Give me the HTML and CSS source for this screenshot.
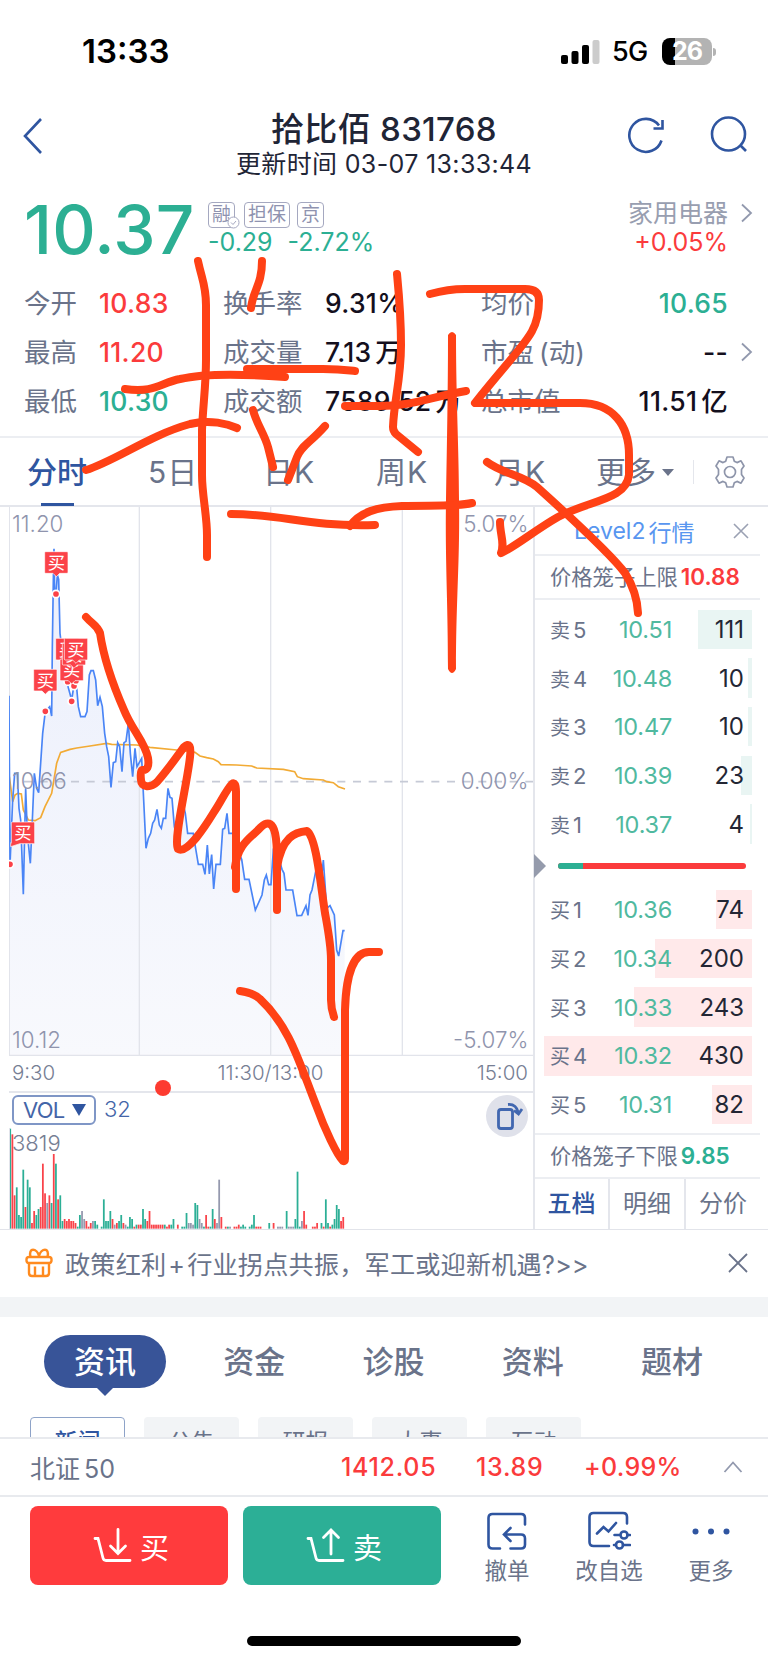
FILE: index.html
```html
<!DOCTYPE html>
<html lang="zh-CN">
  <head>
    <meta charset="UTF-8" />
    <meta name="viewport" content="width=device-width, initial-scale=1.0" />
    <title>拾比佰 831768</title>
    <link rel="stylesheet" href="styles.css">
  </head>
  <body>
    <div class="status-bar">
      <span class="clock">13:33</span>
      <div class="status-right">
        <svg class="signal" width="40" height="26" viewBox="0 0 40 26">
          <rect x="0" y="16" width="7" height="9" rx="2" />
          <rect x="10.500" y="12" width="7" height="13" rx="2" />
          <rect x="21" y="6" width="7" height="19" rx="2" />
          <rect x="31.500" y="1" width="7" height="24" rx="2" fill="#ccc" />
        </svg>
        <span class="network">5G</span>
        <span class="battery">26</span>
        <span class="battery-nub"></span>
      </div>
    </div>

    <header class="nav">
      <svg class="nav-back" width="22" height="38" viewBox="0 0 22 38">
        <path d="M19 2 L3 19 L19 36" />
      </svg>
      <div class="nav-title">
        <h1>拾比佰 831768</h1>
        <p>更新时间 03-07 13:33:44</p>
      </div>
      <div class="nav-icons">
        <svg width="40" height="40" viewBox="0 0 40 40">
          <path d="M34.500 25.500 A16.500 16.500 0 1 1 32 10.500" />
          <path d="M35.500 5 V13.500 H26.500" />
        </svg>
        <svg width="40" height="40" viewBox="0 0 40 40">
          <circle cx="19.500" cy="19" r="16.500" />
          <path d="M31 30 L37 36" />
        </svg>
      </div>
    </header>

    <section class="quote">
      <div class="price">10.37</div>
      <div class="quote-mid">
        <div class="tags">
          <span class="tag tag-margin">融<svg width="13" height="13" viewBox="0 0 13 13"><circle cx="6.500" cy="6.500" r="5.500" /><path d="M4 6.500 L6 8.500 L9 5" /></svg></span>
          <span class="tag">担保</span>
          <span class="tag">京</span>
        </div>
        <div class="change green"><span>-0.29</span><span>-2.72%</span></div>
      </div>
      <div class="sector">
        <div class="sector-name">家用电器</div>
        <div class="sector-change red">+0.05%</div>
      </div>
      <svg class="chevron" width="14" height="20" viewBox="0 0 14 20"><path d="M2 1.500 L11 10 L2 18.500" /></svg>
    </section>

    <section class="stats">
      <span class="label">今开</span><span class="num red">10.83</span>
      <span class="label">换手率</span><span class="num">9.31%</span>
      <span class="label">均价</span><span class="num right green">10.65</span><span></span>
      <span class="label">最高</span><span class="num red">11.20</span>
      <span class="label">成交量</span><span class="num">7.13<i>万</i></span>
      <span class="label">市盈<i>(动)</i></span><span class="num right">--</span>
      <svg class="chevron" width="14" height="20" viewBox="0 0 14 20"><path d="M2 1.500 L11 10 L2 18.500" /></svg>
      <span class="label">最低</span><span class="num green">10.30</span>
      <span class="label">成交额</span><span class="num">7589.52<i>万</i></span>
      <span class="label">总市值</span><span class="num right">11.51<i>亿</i></span><span></span>
    </section>

    <nav class="periods">
      <span class="period active">分时</span>
      <span class="period">5<i>日</i></span>
      <span class="period">日<i>K</i></span>
      <span class="period">周<i>K</i></span>
      <span class="period">月<i>K</i></span>
      <span class="period period-more">更多<b class="caret"></b></span>
      <span class="settings">
        <svg width="36" height="36" viewBox="0 0 36 36">
          <path d="M15 3 H21 L22.300 7.200 L25 8.600 L29 6.800 L32 12 L29.500 15.500 V20.500 L32 24 L29 29.200 L25 27.400 L22.300 28.800 L21 33 H15 L13.700 28.800 L11 27.400 L7 29.200 L4 24 L6.500 20.500 V15.500 L4 12 L7 6.800 L11 8.600 L13.700 7.200 Z" />
          <circle cx="18" cy="18" r="5.500" />
        </svg>
      </span>
    </nav>

    <main class="board">
      <div class="charts">
        <!-- plot units are a third of a pixel -->
        <svg class="plot" width="524" height="549" viewBox="27 21 1572 1647">
          <defs>
            <linearGradient id="area" x1="0" y1="0" x2="0" y2="1">
              <stop offset="0" stop-color="#ebeffc" />
              <stop offset="1" stop-color="#f8f9fd" />
            </linearGradient>
          </defs>
          <path class="area" id="price-area" />
          <path class="grid" d="M28 18 V1668 M418 18 V1668 M812 18 V1668 M1207 18 V1668 M27 1666 H1599" />
          <path class="zero" d="M72 845 H1599" />
          <polyline class="avg" points="28,830 38,905 45,885 53,880 64,882 70,930 78,945 85,960 105,962 122,953 135,920 155,880 160,850 170,790 182,757 210,748 230,744 270,738 320,730 335,733 410,735 450,742 530,750 585,757 600,768 620,773 640,777 655,785 663,794 710,795 755,798 770,804 850,808 884,815 892,830 910,836 970,840 980,845 1000,848 1015,860 1035,867" />
          <polyline class="line" id="price-line" points="27,587 30,1095 38,900 44,820 52,820 57,925 62,960 70,1183 77,865 82,1000 91,1090 97,960 103,820 110,865 116,878 128,700 136,634 149,620 155,648 157,440 160,240 162,146 164,270 168,282 172,225 176,238 180,400 190,480 200,545 215,600 222,555 228,540 235,620 242,650 255,650 261,635 268,525 273,512 280,512 287,540 293,617 300,592 307,620 314,700 320,740 326,770 333,862 340,788 347,785 353,728 359,740 366,815 372,728 378,724 385,670 391,760 398,830 405,745 411,800 425,775 431,900 438,1045 445,1015 452,1000 458,970 464,960 471,928 478,975 484,985 490,955 497,955 504,865 510,892 516,895 523,980 530,1010 540,950 550,915 556,940 563,1000 580,1000 586,1040 595,1093 608,1093 615,1123 622,1035 628,1122 635,1064 641,1167 648,1093 661,1093 668,988 674,985 681,940 687,1000 700,1000 712,1050 725,1078 734,1138 747,1138 766,1230 786,1185 793,1140 799,1125 806,1154 813,1154 820,1050 832,1060 846,1108 852,1120 858,1170 878,1170 891,1247 905,1246 918,1217 924,1246 930,1185 936,1170 947,1115 958,1100 964,1140 970,1080 980,1225 990,1217 1003,1245 1010,1350 1016,1368 1029,1292 1034,1292" />
          <g class="axis-text">
            <text x="36" y="95">11.20</text>
            <text x="36" y="868">10.66</text>
            <text x="36" y="1643">10.12</text>
            <text x="1585" y="95" text-anchor="end">5.07%</text>
            <text x="1585" y="868" text-anchor="end">0.00%</text>
            <text x="1585" y="1643" text-anchor="end">-5.07%</text>
          </g>
          <g id="trades"></g>
        </svg>
        <div class="time-axis"><span>9:30</span><span class="noon">11:30/13:00</span><span>15:00</span></div>
        <div class="volume">
          <div class="volume-head">
            <span class="vol-select">VOL<b class="caret-blue"></b></span>
            <span class="vol-value">32</span>
            <span class="rotate">
              <svg width="42" height="42" viewBox="0 0 42 42">
                <rect x="12.500" y="14.500" width="14" height="19" rx="2.500" />
                <path d="M22 9.500 C28 9 31 12 32.500 18 M28 15.500 L32.500 19 L36 14" />
              </svg>
            </span>
          </div>
          <div class="vol-max">3819</div>
          <svg class="vol-bars" id="vol-bars" width="524" height="101" viewBox="27 0 1572 303"></svg>
        </div>
      </div>

      <aside class="book">
        <div class="level2">Level2<i>行情</i>
          <svg width="16" height="16" viewBox="0 0 16 16"><path d="M1 1 L15 15 M15 1 L1 15" /></svg>
        </div>
        <div class="cage">价格笼子上限<b class="red">10.88</b></div>
        <div class="orders">
          <div class="order sell"><span class="bar" style="width: 54px"></span><span class="side">卖<i>5</i></span><span class="at">10.51</span><span class="qty">111</span></div>
          <div class="order sell"><span class="bar" style="width: 4.500px"></span><span class="side">卖<i>4</i></span><span class="at">10.48</span><span class="qty">10</span></div>
          <div class="order sell"><span class="bar" style="width: 4.500px"></span><span class="side">卖<i>3</i></span><span class="at">10.47</span><span class="qty">10</span></div>
          <div class="order sell"><span class="bar" style="width: 11px"></span><span class="side">卖<i>2</i></span><span class="at">10.39</span><span class="qty">23</span></div>
          <div class="order sell"><span class="bar" style="width: 2px"></span><span class="side">卖<i>1</i></span><span class="at">10.37</span><span class="qty">4</span></div>
        </div>
        <div class="ratio"><b class="ratio-arrow"></b><span class="ratio-bar"><span class="ratio-sell" style="width: 13.500%"></span></span></div>
        <div class="orders orders-buy">
          <div class="order buy"><span class="bar" style="width: 36px"></span><span class="side">买<i>1</i></span><span class="at">10.36</span><span class="qty">74</span></div>
          <div class="order buy"><span class="bar" style="width: 97px"></span><span class="side">买<i>2</i></span><span class="at">10.34</span><span class="qty">200</span></div>
          <div class="order buy"><span class="bar" style="width: 118px"></span><span class="side">买<i>3</i></span><span class="at">10.33</span><span class="qty">243</span></div>
          <div class="order buy"><span class="bar" style="width: 208.500px"></span><span class="side">买<i>4</i></span><span class="at">10.32</span><span class="qty">430</span></div>
          <div class="order buy"><span class="bar" style="width: 40px"></span><span class="side">买<i>5</i></span><span class="at">10.31</span><span class="qty">82</span></div>
        </div>
        <div class="cage cage-low">价格笼子下限<b class="green">9.85</b></div>
        <div class="book-tabs"><span class="active">五档</span><span>明细</span><span>分价</span></div>
      </aside>
    </main>

    <section class="banner">
      <svg class="gift" width="28" height="30" viewBox="0 0 28 30">
        <rect x="1.500" y="9" width="25" height="6" rx="2.500" />
        <path d="M4 15 V25 Q4 28 7 28 H21 Q24 28 24 25 V15 M10 18.500 V28 M18 18.500 V28" />
        <path d="M5.500 9 C3 -1 12 0 14 8 C16 0 25 -1 22.500 9" />
      </svg>
      <span class="banner-text">政策红利<i>+</i>行业拐点共振，军工或迎新机遇<em>?&gt;&gt;</em></span>
      <svg class="banner-close" width="20" height="20" viewBox="0 0 20 20"><path d="M1 1 L19 19 M19 1 L1 19" /></svg>
    </section>

    <section class="news">
      <div class="news-tabs">
        <span class="pill">资讯</span><span>资金</span><span>诊股</span><span>资料</span><span>题材</span>
      </div>
      <div class="news-filters">
        <span class="active">新闻</span><span>公告</span><span>研报</span><span>大事</span><span>互动</span>
      </div>
    </section>

    <section class="index-bar">
      <span class="index-name">北证<i>50</i></span>
      <span class="index-num index-price">1412.05</span>
      <span class="index-num index-diff">13.89</span>
      <span class="index-num">+0.99%</span>
      <svg width="20" height="14" viewBox="0 0 20 14"><path d="M1.500 12 L10 2.500 L18.500 12" /></svg>
    </section>

    <footer class="actions">
      <button class="trade trade-buy">
        <svg width="40" height="36" viewBox="0 0 40 36"><path d="M2 10.500 H5 L10 30 Q10.600 32.500 13 32.500 H37 M25 1.500 V24 M17.500 18 L25 25.500 L32.500 18" /></svg>买
      </button>
      <button class="trade trade-sell">
        <svg width="40" height="36" viewBox="0 0 40 36"><path d="M2 10.500 H5 L10 30 Q10.600 32.500 13 32.500 H37 M25 26 V3 M17.500 9.500 L25 2 L32.500 9.500" /></svg>卖
      </button>
      <div class="action">
        <svg width="44" height="40" viewBox="0 0 44 40"><path d="M15 37.500 H7.500 Q3.500 37.500 3.500 33.500 V7 Q3.500 3 7.500 3 H36 Q40 3 40 7 V13.500 M25.500 37.500 H36 Q40 37.500 40 33.500 V27.500 Q40 23.500 36 23.500 H19.500 M25.500 17 L19 23.500 L25.500 30" /></svg>
        <span>撤单</span>
      </div>
      <div class="action">
        <svg width="44" height="40" viewBox="0 0 44 40"><path d="M22 35 H6.500 Q2.500 35 2.500 31 V6 Q2.500 2 6.500 2 H36 Q40 2 40 6 V12.500 M10 22.500 L16.500 16 L21.500 20.500 L29 12 M27.500 24 H32 M40.500 24 H43 M27 34 H28.500 M36 34 H43" /><circle cx="37" cy="24" r="3.500" /><circle cx="32.500" cy="34" r="3.500" /></svg>
        <span>改自选</span>
      </div>
      <div class="action">
        <svg class="dots" width="44" height="40" viewBox="0 0 44 40"><circle cx="6.500" cy="20.500" r="3" /><circle cx="22" cy="20.500" r="3" /><circle cx="37.500" cy="20.500" r="3" /></svg>
        <span>更多</span>
      </div>
    </footer>
    <div class="home-indicator"></div>

    <!-- pen marks drawn over the whole screen -->
    <svg class="pen" width="768" height="1663" viewBox="0 0 768 1663">
      <path d="M198 261 C202 280 206 285 206 305 V360 C206 385 203 405 202 430 V475 C202 495 207 515 207 535 V557" />
      <path d="M262 261 C262 285 253 290 251 308" />
      <path d="M125 389 C155 393 160 383 180 379 C205 373 245 374 285 377" />
      <path d="M247 369 H323 C338 369 346 370 355 371" />
      <path d="M86 470 C115 461 150 435 190 424 C210 419 228 424 237 428" />
      <path d="M253 410 C257 425 264 433 268 447 L273 467" />
      <path d="M325 426 C310 443 301 446 297 457 C292 470 290 475 288 480" />
      <path d="M397 274 C399 295 401 315 401 345 C401 380 394 400 393 427 Q393 431 396 434 L418 452" />
      <path d="M345 406 H375 C410 407 430 397 466 391" />
      <path d="M430 294 Q448 289 465 289 H525 Q539 289 539 300 C539 335 525 340 475 403 H580 C613 403 629 425 629 455 V475 C626 500 590 500 558 517 C535 530 515 547 501 553 C505 543 500 535 500 522" />
      <path class="pen-fill" d="M448 335 Q452 329 456 335 C456 400 459 450 459 500 C460 560 456 600 456 669 Q452 677 448 669 C448 600 445 560 446 500 C447 440 448 390 448 335 Z" />
      <path d="M231 514 C285 514 305 527 375 525" />
      <path d="M350 526 C360 512 377 507 402 506 C430 505 455 507 472 503" />
      <path d="M487 462 C503 474 523 475 537 487 C557 505 610 553 625 573 Q637 592 638 613" />
      <path d="M86 617 C92 624 97 625 100 633 C104 660 113 685 124 710 C132 730 145 742 148 758 Q150 771 142 770 Q140 771 141 780 C141 788 151 788 157 782 C170 767 178 755 184 747 Q192 740 190 757 C187 785 173 840 178 849 C187 855 206 825 214 812 C221 802 226 790 232 784 Q236 781 236 792 V889" />
      <path d="M235 867 C238 843 251 838 261 827 C278 812 277 850 277 865 V910 M277 867 C282 837 295 832 307 831 C316 837 320 880 325 913 C329 935 331 945 331 960 V1000 Q331 1008 334 1017" />
      <path d="M240 991 Q254 993 260 999 C290 1027 299 1062 316 1105 C325 1130 337 1155 343 1161 Q345 1162 345 1159 V1010 C346 974 354 952 369 952 H379" />
      <circle class="recording-dot" cx="163" cy="1088" r="8" />
    </svg>

    <script>
      // minute volumes from 9:30, r = up, g = down, n = flat, - = no trade
      const volumes =
        "g300 r283 r100 g124 g41 g35 g177 r65 g147 g124 r17 r53 g41 g59 r65 r195 r106 n77 r100 g77 r224 g195 r88 g100 g23 r29 r23 r29 r23 r23 r17 g6 g41 n53 n29 r23 r6 r17 n23 g23 g12 - g6 g88 g23 g23 g53 r29 n12 r17 g23 g41 r17 n12 g6 g35 g29 r6 g12 r12 r12 g59 g29 r23 r53 r12 r12 r12 r12 r12 r12 g12 r6 r12 g12 g29 - r12 - g6 g6 g47 n17 n17 n12 g77 g71 n29 n17 g6 r41 r6 g6 g59 r29 n17 n147 r35 - r6 g6 n6 - r6 r6 r12 g6 g12 g6 - g6 g12 g41 r6 r6 r6 - - - g17 - r17 - n6 n6 n6 - g53 n6 n6 n6 g29 g171 g6 n23 r53 r12 - - r6 r6 r17 - g17 r6 g88 g17 r6 g12 g29 g71 g59 r23 r35";
      const colors = { r: "#f9434a", g: "#2caf96", n: "#9599ae" };
      let bars = "";
      volumes.split(" ").forEach((v, i) => {
        if (v === "-") return;
        const h = Number(v.slice(1));
        bars += `<rect x="${28 + i * 6.53}" y="${302 - h}" width="5.300" height="${h}" fill="${colors[v[0]]}" />`;
      });
      document.getElementById("vol-bars").innerHTML = bars + '<path class="grid" d="M28 0 V303" />';

      const points = document.getElementById("price-line").getAttribute("points");
      document.getElementById("price-area").setAttribute("d", `M27 1668 L${points} L1034 1668 Z`);

      // own buys: the dot on the line, then the flag above it
      const dots = [[168, 282], [136, 634], [203, 545], [215, 604], [222, 558], [228, 542], [30, 1093]];
      const flags = [[134, 155], [101, 508], [167, 415], [180, 477], [187, 430], [193, 415], [34, 966, "left"]];
      let trades = "";
      dots.forEach(([x, y]) => {
        trades += `<circle cx="${x}" cy="${y}" r="11" />`;
      });
      flags.forEach(([x, y, side]) => {
        const tip = side ? `H${x + 26} L${x - 2} ${y + 74} V${y + 62}` : `H${x + 45} L${x + 35} ${y + 75} L${x + 25} ${y + 65} H${x + 3}`;
        trades += `<path d="M${x} ${y + 3} Q${x} ${y} ${x + 3} ${y} H${x + 67} Q${x + 70} ${y} ${x + 70} ${y + 3} V${y + 62} Q${x + 70} ${y + 65} ${x + 67} ${y + 65} ${tip} Q${x} ${y + 65} ${x} ${y + 62} Z" /><text x="${x + 35}" y="${y + 52}">买</text>`;
      });
      document.getElementById("trades").innerHTML = trades;
    </script>
  </body>
</html>
```
FILE: styles.css
```css
* {
  box-sizing: border-box;
}

body {
  margin: 0;
  width: 768px;
  height: 1663px;
  overflow: hidden;
  position: relative;
  background-color: #ffffff;
  color: #1f2536;
  font-family: "Inter", "Noto Sans CJK SC", sans-serif;
}

i,
em {
  font-style: normal;
}

svg {
  display: block;
  fill: none;
}

.red {
  color: #fb3b3c;
}

.green {
  color: #2caf93;
}

/* Status bar */
.status-bar {
  height: 96px;
  padding: 31px 52px 0 82px;
  display: flex;
  justify-content: space-between;
  align-items: flex-start;
  color: #000;
}

.clock {
  font-size: 33px;
  line-height: 41px;
  font-weight: 600;
}

.status-right {
  display: flex;
  align-items: center;
  height: 41px;
}

.signal {
  fill: #000;
  margin-right: 11px;
}

.network {
  font-size: 27px;
  font-weight: 500;
  letter-spacing: -0.6px;
  margin-right: 13px;
  width: 37px;
}

.battery {
  width: 50px;
  height: 27px;
  border-radius: 8px;
  background: linear-gradient(to right, #000 13px, #b3b3b3 13px);
  color: #fff;
  font-size: 25px;
  line-height: 27px;
  font-weight: 700;
  text-align: center;
  letter-spacing: -1px;
}

.battery-nub {
  width: 3px;
  height: 8px;
  margin-left: 1px;
  border-radius: 0 4px 4px 0;
  background-color: #b3b3b3;
}

/* Title bar */
.nav {
  height: 94px;
  padding: 11px 19px 0 22px;
  display: grid;
  grid-template-columns: 130px 1fr 130px;
}

.nav svg {
  stroke: #2f55a0;
  stroke-width: 2.6;
}

.nav-back {
  margin-top: 10px;
}

.nav-title {
  text-align: center;
  white-space: nowrap;
  margin-right: 3px;
}

.nav-title h1 {
  margin: 0;
  font-size: 33px;
  line-height: 44px;
  font-weight: 500;
  letter-spacing: 0.3px;
}

.nav-title p {
  margin: 0;
  font-size: 25px;
  line-height: 27px;
  letter-spacing: 0.35px;
}

.nav-icons {
  display: flex;
  justify-content: space-between;
  margin: 8px 0 0 8px;
}

/* Price */
.quote {
  height: 88px;
  padding: 0 14px 0 24px;
  display: flex;
}

.price {
  width: 184px;
  font-size: 67.5px;
  line-height: 79px;
  font-weight: 500;
  letter-spacing: 0.2px;
  color: #2caf93;
}

.quote-mid {
  flex: 1;
  padding-top: 12px;
}

.tags {
  display: flex;
  gap: 7px;
}

.tag {
  height: 26px;
  padding: 0 3px;
  border: 1.5px solid #a5a8c0;
  border-radius: 4px;
  color: #8f93b0;
  font-size: 19px;
  line-height: 23px;
}

.tag-margin {
  position: relative;
  margin-right: 2px;
}

.tag-margin svg {
  position: absolute;
  right: -6px;
  bottom: -2px;
  fill: #fff;
  stroke: #a5a8c0;
}

.change {
  display: flex;
  gap: 15px;
  font-size: 25px;
  line-height: 28px;
}

.sector {
  padding-top: 8px;
  text-align: right;
  font-size: 25px;
}

.sector-name {
  line-height: 30px;
  color: #989eb0;
}

.sector-change {
  line-height: 28px;
}

.chevron {
  stroke: #9299ae;
  stroke-width: 1.8;
}

.quote .chevron {
  margin: 13px 0 0 12px;
}

/* Figures */
.stats {
  height: 160px;
  border-bottom: 2px solid #eceef2;
  padding-left: 24px;
  display: grid;
  grid-template-columns: 75px 124px 102px 156px 110px 137px 40px;
  grid-template-rows: 49px 49px 49px;
  align-items: center;
  white-space: nowrap;
}

.label {
  font-size: 26.5px;
  line-height: 40px;
  color: #6a738a;
}

.label i {
  margin-left: 5px;
}

.num {
  font-size: 26.5px;
  line-height: 40px;
  font-weight: 500;
  letter-spacing: 0.3px;
}

.num:not(.red):not(.green) {
  color: #140f1d;
}

.num i {
  margin-left: 4px;
}

.right {
  text-align: right;
}

.stats .chevron {
  margin-left: 12px;
}

/* Period tabs */
.periods {
  height: 69px;
  border-bottom: 2px solid #e4e6ec;
  padding-left: 27px;
  display: grid;
  grid-template-columns: 121px 115px 113px 118px 102px 97px 75px;
  line-height: 69px;
  font-size: 30px;
  color: #6a738a;
}

.period i {
  margin-left: 1px;
}

.period.active {
  width: 60px;
  color: #2f55a0;
  font-weight: 500;
  background: linear-gradient(#2f55a0, #2f55a0) 14px 65px / 33px 3px no-repeat;
}

.caret {
  display: inline-block;
  margin-left: 6px;
  border: 6px solid transparent;
  border-top: 7px solid #6a738a;
  border-bottom: 0;
  vertical-align: 7px;
}

.settings {
  height: 24px;
  margin-top: 22px;
  padding-left: 18px;
  border-left: 1.5px solid #e4e6ec;
}

.settings svg {
  margin-top: -6px;
  stroke: #8e95aa;
  stroke-width: 1.7;
  stroke-linejoin: round;
}

/* Charts */
.board {
  height: 723px;
  display: flex;
  border-bottom: 1px solid #e2e4ea;
}

.charts {
  width: 533px;
  padding-left: 9px;
}

.area {
  fill: url(#area);
}

.grid {
  stroke: #e2e4eb;
  stroke-width: 4;
}

.zero {
  stroke: #c6cad6;
  stroke-width: 5;
  stroke-dasharray: 24 23;
}

.avg {
  stroke: #f2ab35;
  stroke-width: 5;
}

.line {
  stroke: #4a85f6;
  stroke-width: 5;
}

.axis-text {
  fill: #8f94ad;
  font-size: 67px;
  font-weight: 300;
}

#trades circle {
  fill: #fb4248;
  stroke: #fff;
  stroke-width: 5;
}

#trades path {
  fill: #fb4248;
  stroke: #fff;
  stroke-width: 2;
}

#trades text {
  fill: #fff;
  font-size: 52px;
  text-anchor: middle;
}

.time-axis {
  height: 37px;
  padding: 0 5px 0 3px;
  border-bottom: 2px solid #e4e6ec;
  display: flex;
  justify-content: space-between;
  font-size: 20.5px;
  line-height: 34px;
  color: #767e94;
  font-weight: 300;
}

.noon {
  margin-left: 9px;
}

.volume {
  height: 136px;
}

.volume-head {
  height: 37px;
  padding: 2px 5px 0 3px;
  display: flex;
  color: #4465a8;
}

.vol-select {
  width: 84px;
  height: 30px;
  border: 2px solid #7f96c6;
  border-radius: 6px;
  padding-left: 9px;
  font-size: 22px;
  line-height: 26px;
  letter-spacing: -0.8px;
}

.caret-blue {
  display: inline-block;
  margin-left: 8px;
  border: 7px solid transparent;
  border-top: 12px solid #2f55a0;
  border-bottom: 0;
  vertical-align: 2px;
}

.vol-value {
  margin-left: 8px;
  font-size: 22px;
  line-height: 29px;
  font-weight: 300;
}

.rotate {
  width: 42px;
  height: 42px;
  margin-left: auto;
  border-radius: 50%;
  background-color: #dfe1ea;
}

.rotate svg {
  stroke: #4167b0;
  stroke-width: 2.8;
}

.vol-max {
  height: 29px;
  padding-left: 3px;
  font-size: 22px;
  line-height: 26px;
  font-weight: 300;
  color: #767e94;
}

.vol-bars {
  margin-top: -31px;
}

/* Order book */
.book {
  width: 235px;
  border-left: 2px solid #e4e6ec;
  padding-right: 8px;
}

.level2 {
  height: 49px;
  padding: 0 11px 0 39px;
  border-bottom: 2px solid #eceef2;
  display: flex;
  align-items: center;
  font-size: 23px;
  color: #5896f0;
}

.level2 i {
  margin-left: 3px;
}

.level2 svg {
  margin-left: auto;
  stroke: #9ba1b3;
  stroke-width: 1.6;
}

.cage {
  height: 44px;
  padding-left: 15px;
  border-bottom: 2px solid #eceef2;
  font-size: 21.3px;
  line-height: 42px;
  color: #6a738a;
  white-space: nowrap;
}

.cage b {
  margin-left: 3px;
  font-weight: 600;
  font-size: 22.5px;
}

.orders {
  padding: 5px 8px 0 9px;
}

.orders-buy {
  padding-top: 3px;
}

.order {
  height: 48.7px;
  position: relative;
  display: flex;
  align-items: center;
  padding: 0 8px 0 6px;
}

/* depth bar lies behind the numbers */
.bar {
  position: absolute;
  right: 0;
  top: 4.5px;
  height: 39.5px;
}

.sell .bar {
  background-color: #e9f5f3;
}

.buy .bar {
  background-color: #ffe9ea;
}

.side,
.at,
.qty {
  position: relative;
}

.side {
  width: 36px;
  font-size: 20px;
  white-space: nowrap;
  color: #6a738a;
}

.side i {
  margin-left: 3px;
  font-size: 22px;
}

.at {
  width: 86px;
  text-align: right;
  font-size: 23.5px;
  letter-spacing: -0.2px;
  color: #50b99f;
}

.qty {
  margin-left: auto;
  font-size: 24px;
  color: #232634;
}

.ratio {
  height: 32px;
  margin-top: 2px;
  display: flex;
  align-items: center;
}

.ratio-arrow {
  margin-left: -1px;
  border: 12px solid transparent;
  border-left-color: #959bac;
  border-right: 0;
}

.ratio-bar {
  width: 188px;
  height: 6px;
  margin-left: 12px;
  border-radius: 3px;
  overflow: hidden;
  background-color: #fb3b3c;
}

.ratio-sell {
  display: block;
  height: 6px;
  background-color: #2caf93;
}

.cage-low {
  height: 46px;
  margin-top: 4px;
  border-top: 2px solid #eceef2;
}

.book-tabs {
  display: grid;
  grid-template-columns: 73px 76px 76px;
  height: 50px;
  line-height: 50px;
  font-size: 24px;
  text-align: center;
  color: #6a738a;
}

.book-tabs span + span {
  border-left: 2px solid #e4e6ec;
}

.book-tabs .active {
  color: #2f55a0;
  font-weight: 500;
}

/* Banner */
.banner {
  height: 67px;
  padding: 0 20px 2px 25px;
  display: flex;
  align-items: center;
}

.gift {
  stroke: #ff8a1e;
  stroke-width: 2.4;
}

.banner-text {
  margin-left: 12px;
  flex: 1;
  font-size: 25.2px;
  letter-spacing: 0.15px;
  color: #6a738a;
}

.banner-text i {
  margin: 0 2px;
}

.banner-close {
  stroke: #6a738a;
  stroke-width: 1.8;
}

/* News */
.news {
  height: 140px;
  border-top: 20px solid #f2f4f6;
  overflow: hidden;
}

.news-tabs {
  height: 100px;
  padding: 18px 65px 0 44px;
  display: flex;
  justify-content: space-between;
  font-size: 31px;
  line-height: 53px;
  color: #6a738a;
  font-weight: 500;
}

.news-tabs .pill {
  width: 122px;
  height: 53px;
  margin-right: -20px;
  border-radius: 27px;
  background-color: #385498;
  color: #fff;
  text-align: center;
}

.pill::after {
  content: "";
  display: block;
  width: 0;
  margin: 0 auto;
  border: 8px solid transparent;
  border-top-color: #385498;
  border-bottom: 0;
}

.news-filters {
  padding-left: 30px;
  display: grid;
  grid-template-columns: repeat(5, 95px);
  gap: 19px;
}

.news-filters span {
  height: 48px;
  border-radius: 4px;
  background-color: #f2f4f6;
  color: #6a738a;
  font-size: 23px;
  line-height: 51px;
  text-align: center;
}

.news-filters .active {
  border: 1.5px solid #8ea3c8;
  background-color: #fff;
  color: #2f55a0;
  font-weight: 500;
  line-height: 49px;
}

/* Index */
.index-bar {
  height: 60px;
  padding: 0 25px 1px 30px;
  border-top: 2px solid #e8eaee;
  border-bottom: 2px solid #e8eaee;
  display: flex;
  align-items: center;
  font-size: 25px;
}

.index-name {
  width: 311px;
  color: #6a738a;
}

.index-name i {
  margin-left: 4px;
}

.index-num {
  width: 94px;
  color: #fb3b3c;
  font-weight: 500;
  letter-spacing: 0.3px;
  white-space: nowrap;
}

.index-price {
  width: 135px;
  letter-spacing: 0.7px;
}

.index-diff {
  width: 108px;
  letter-spacing: 0.7px;
}

.index-bar svg {
  margin-left: auto;
  stroke: #9299ae;
  stroke-width: 1.8;
}

/* Bottom actions */
.actions {
  height: 139px;
  padding: 9px 0 0 30px;
  display: flex;
  align-items: flex-start;
}

.trade {
  width: 198px;
  height: 79px;
  margin-right: 15px;
  padding: 0 0 0 4px;
  border: none;
  border-radius: 8px;
  color: #fff;
  font-family: inherit;
  font-size: 29px;
  display: flex;
  align-items: center;
  justify-content: center;
  gap: 7px;
}

.trade svg {
  stroke: #fff;
  stroke-width: 2.8;
  stroke-linecap: round;
}

.trade-buy {
  background-color: #ff3b3d;
}

.trade-sell {
  background-color: #2caf96;
}

.action {
  width: 102px;
  display: flex;
  flex-direction: column;
  align-items: center;
  font-size: 22.5px;
  line-height: 40px;
  color: #6a738a;
}

.action svg {
  margin-top: 5px;
  stroke: #2f55a0;
  stroke-width: 2.6;
  stroke-linecap: round;
}

.action .dots {
  fill: #2f55a0;
  stroke: none;
}

.home-indicator {
  width: 274px;
  height: 10px;
  margin: 0 auto;
  border-radius: 5px;
  background-color: #000;
}

/* Pen marks over the page */
.pen {
  position: absolute;
  left: 0;
  top: 0;
  stroke: #ff4115;
  stroke-width: 8;
  stroke-linecap: round;
  stroke-linejoin: round;
}

.pen-fill {
  fill: #ff4115;
  stroke: none;
}

.recording-dot {
  fill: #fd3b30;
  stroke: none;
}
```
